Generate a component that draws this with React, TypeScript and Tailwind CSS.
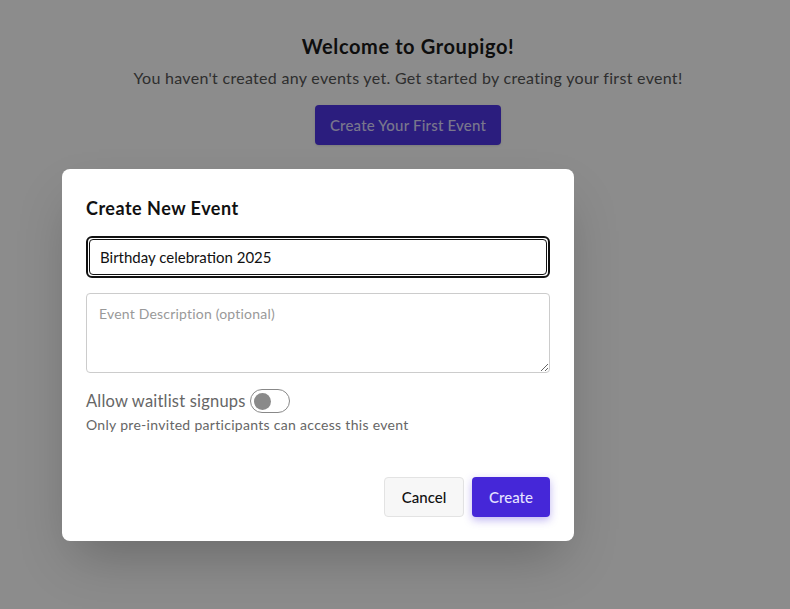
import { useState } from 'react';

export default function App() {
  const [title, setTitle] = useState('Birthday celebration 2025');
  const [waitlist, setWaitlist] = useState(false);

  return (
    <div className="relative h-[609px] w-[790px] overflow-hidden bg-white font-['Lato',sans-serif] text-[#1a1a1a]">
      {/* Page behind the modal */}
      <main className="flex flex-col items-center pl-[26px] pt-[32px]">
        <h1 className="text-[20px] font-bold leading-[28px] tracking-[0.6px]">Welcome to Groupigo!</h1>
        <p className="mt-[6px] text-[16px] leading-[24px] tracking-[0.3px] text-[#555]">
          You haven't created any events yet. Get started by creating your first event!
        </p>
        <button
          type="button"
          className="mt-[15px] h-[40px] rounded-[4px] bg-[#4f35e6] px-[15px] text-[15px] font-medium tracking-[0.2px] text-[#dcd8ff] shadow"
        >
          Create Your First Event
        </button>
      </main>

      {/* Overlay */}
      <div className="absolute inset-0 bg-black/45" />

      {/* Modal */}
      <div className="absolute left-[62px] top-[169px] w-[512px] rounded-[8px] bg-white px-[24px] pb-[24px] pt-[27px] shadow-2xl">
        <h2 className="text-[18px] font-bold leading-[24px] tracking-[0.5px] text-[#111]">Create New Event</h2>

        <div className="mt-[16px] rounded-[6px] border-2 border-[#111] p-[1px]">
          <input
            value={title}
            onChange={(e) => setTitle(e.target.value)}
            className="h-[36px] w-full rounded-[4px] border border-[#111] px-[10px] text-[15px] text-[#111] outline-none"
          />
        </div>

        <textarea
          placeholder="Event Description (optional)"
          className="mt-[15px] block h-[80px] w-full resize-y rounded-[4px] border border-[#ccc] px-[12px] py-[9px] text-[14px] tracking-[0.2px] text-[#111] placeholder:text-[#999] outline-none"
        />

        <div className="mt-[16px] flex items-center gap-[4px]">
          <span className="text-[16.5px] leading-[24px] tracking-[0.2px] text-[#666]">Allow waitlist signups</span>
          <button
            type="button"
            onClick={() => setWaitlist(!waitlist)}
            className={`flex h-[24px] w-[40px] items-center rounded-full border border-[#888] px-[3px] ${waitlist ? 'justify-end bg-[#4a2bdb]' : 'justify-start bg-white'}`}
          >
            <span className="h-[17px] w-[17px] rounded-full bg-[#8a8a8a]" />
          </button>
        </div>
        <p className="mt-[2px] text-[14px] leading-[20px] tracking-[0.3px] text-[#666]">
          Only pre-invited participants can access this event
        </p>

        <div className="mt-[42px] flex justify-end gap-[8px]">
          <button
            type="button"
            className="h-[40px] w-[80px] rounded-[4px] border border-[#e3e3e3] bg-[#f7f7f7] text-[15px] font-medium text-[#111]"
          >
            Cancel
          </button>
          <button
            type="button"
            className="h-[40px] w-[78px] rounded-[4px] bg-[#4527d8] text-[15px] font-medium text-[#e4e2ff] shadow-[0_3px_8px_rgba(69,39,216,0.35)]"
          >
            Create
          </button>
        </div>
      </div>
    </div>
  );
}
